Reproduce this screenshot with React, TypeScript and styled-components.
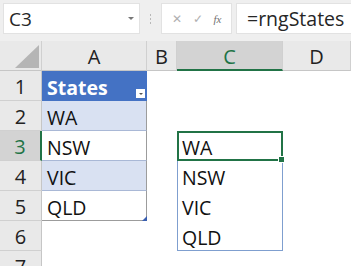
import React from "react";
import styled, { createGlobalStyle, css } from "styled-components";

const Global = createGlobalStyle`
  html, body { margin: 0; padding: 0; background: #ffffff; overflow: hidden; }
  body { font-family: "Open Sans", "Noto Sans", sans-serif; }
`;

const FONT = `"Open Sans", "Noto Sans", sans-serif`;
const GREEN = "#217346";

// 顶部编辑栏
const TopBar = styled.div`
  height: 41px;
  background: #efefef;
  display: flex;
  align-items: flex-start;
  padding: 3px 0 0 3px;
  box-sizing: border-box;
`;

const NameBox = styled.div`
  width: 137px;
  height: 31px;
  background: #fff;
  border: 1px solid #e2e2e2;
  box-sizing: border-box;
  display: flex;
  align-items: center;
  justify-content: space-between;
  padding: 0 5px 0 5px;
  font-family: ${FONT};
  font-size: 19px;
  color: #262626;
`;

const Caret = styled.span`
  width: 0;
  height: 0;
  border-left: 3px solid transparent;
  border-right: 3px solid transparent;
  border-top: 3px solid #777;
`;

const Dots = styled.div`
  width: 21px;
  height: 31px;
  display: flex;
  flex-direction: column;
  align-items: center;
  justify-content: center;
  gap: 2px;
  span {
    width: 1px;
    height: 2px;
    background: #b8b8b8;
  }
`;

const FuncBox = styled.div`
  width: 71px;
  height: 31px;
  background: #fff;
  border: 1px solid #e2e2e2;
  box-sizing: border-box;
  display: flex;
  align-items: center;
  justify-content: space-around;
  padding: 0 4px;
  color: #b0b0b0;
  font-family: ${FONT};
  font-size: 12px;
`;

const Fx = styled.span`
  font-family: "Liberation Serif", serif;
  font-style: italic;
  font-size: 11px;
  color: #707070;
`;

const Formula = styled.div`
  flex: 1;
  margin-left: 4px;
  height: 31px;
  background: #fff;
  border: 1px solid #e2e2e2;
  border-right: none;
  box-sizing: border-box;
  padding-left: 10px;
  display: flex;
  align-items: center;
  font-family: ${FONT};
  font-size: 19.5px;
  color: #262626;
`;

// 表格区域
const Sheet = styled.div`
  display: grid;
  grid-template-columns: 42px 105px 30px 106px 1fr;
  grid-template-rows: 30px repeat(7, 30px);
`;

const Corner = styled.div`
  background: #e9e9e9;
  border-right: 1px solid #d0d0d0;
  border-bottom: 1px solid #c6c6c6;
  box-sizing: border-box;
  position: relative;
  &::after {
    content: "";
    position: absolute;
    right: 2px;
    bottom: 2px;
    width: 0;
    height: 0;
    border-left: 24px solid transparent;
    border-bottom: 23px solid #b5b5b5;
  }
`;

const ColHead = styled.div<{ $active?: boolean }>`
  background: ${(p) => (p.$active ? "#d3d3d3" : "#e9e9e9")};
  color: ${(p) => (p.$active ? GREEN : "#222")};
  border-right: 1px solid #d0d0d0;
  border-bottom: ${(p) => (p.$active ? `2px solid ${GREEN}` : "1px solid #c6c6c6")};
  box-sizing: border-box;
  display: flex;
  align-items: center;
  justify-content: center;
  font-family: ${FONT};
  font-size: 20px;
  padding-top: 2px;
`;

const RowHead = styled.div<{ $active?: boolean }>`
  background: ${(p) => (p.$active ? "#d3d3d3" : "#e9e9e9")};
  color: ${(p) => (p.$active ? GREEN : "#222")};
  border-bottom: 1px solid #d0d0d0;
  border-right: ${(p) => (p.$active ? `2px solid ${GREEN}` : "1px solid #c6c6c6")};
  box-sizing: border-box;
  display: flex;
  align-items: center;
  justify-content: center;
  font-family: ${FONT};
  font-size: 20px;
  padding-top: 2px;
`;

type Tone = "head" | "band" | "plain";

const TableCell = styled.div<{ $tone: Tone; $last?: boolean }>`
  position: relative;
  box-sizing: border-box;
  display: flex;
  align-items: center;
  padding: 3px 0 0 5px;
  font-family: ${FONT};
  font-size: 19.5px;
  color: #111;
  border-right: 1px solid #9c9c9c;
  border-bottom: 1px solid ${(p) => (p.$last ? "#9c9c9c" : "#a9b8d6")};
  background: ${(p) =>
    p.$tone === "head" ? "#4472c4" : p.$tone === "band" ? "#d9e1f2" : "#ffffff"};
  ${(p) =>
    p.$tone === "head" &&
    css`
      color: #fff;
      font-weight: 700;
      border-right-color: #4472c4;
      border-bottom-color: #4472c4;
    `}
`;

const FilterBtn = styled.span`
  position: absolute;
  right: 1px;
  bottom: 2px;
  width: 9px;
  height: 9px;
  background: #fff;
  display: flex;
  align-items: center;
  justify-content: center;
  &::after {
    content: "";
    border-left: 2px solid transparent;
    border-right: 2px solid transparent;
    border-top: 2px solid #555;
  }
`;

const ResizeMark = styled.span`
  position: absolute;
  right: -1px;
  bottom: -1px;
  width: 0;
  height: 0;
  border-left: 5px solid transparent;
  border-bottom: 5px solid #3a5fb0;
`;

const Blank = styled.div``;

const SpillCell = styled.div<{ $selected?: boolean; $last?: boolean }>`
  position: relative;
  box-sizing: border-box;
  display: flex;
  align-items: center;
  padding: 3px 0 0 4px;
  font-family: ${FONT};
  font-size: 19.5px;
  color: #111;
  border-left: 1px solid #7f9fcf;
  border-right: 1px solid #7f9fcf;
  ${(p) => p.$last && css`border-bottom: 1px solid #7f9fcf;`}
  ${(p) =>
    p.$selected &&
    css`
      border: 2px solid ${GREEN};
      padding-left: 3px;
    `}
`;

const FillHandle = styled.span`
  position: absolute;
  right: -4px;
  bottom: -4px;
  width: 5px;
  height: 5px;
  background: ${GREEN};
  border: 1px solid #fff;
  z-index: 2;
`;

const states = ["WA", "NSW", "VIC", "QLD"];

const App: React.FC = () => {
  const rows = [1, 2, 3, 4, 5, 6, 7];
  return (
    <>
      <Global />
      <TopBar>
        <NameBox>
          <span>C3</span>
          <Caret />
        </NameBox>
        <Dots>
          <span />
          <span />
          <span />
        </Dots>
        <FuncBox>
          <span>✕</span>
          <span>✓</span>
          <Fx>fx</Fx>
        </FuncBox>
        <Formula>=rngStates</Formula>
      </TopBar>
      <Sheet>
        <Corner />
        <ColHead>A</ColHead>
        <ColHead>B</ColHead>
        <ColHead $active>C</ColHead>
        <ColHead>D</ColHead>
        {rows.map((r) => {
          const tableRow = r - 1;
          const spillIdx = r - 3;
          return (
            <React.Fragment key={r}>
              <RowHead $active={r === 3}>{r}</RowHead>
              {r === 1 ? (
                <TableCell $tone="head">
                  States
                  <FilterBtn />
                </TableCell>
              ) : r <= 5 ? (
                <TableCell $tone={tableRow % 2 === 1 ? "band" : "plain"} $last={r === 5}>
                  {states[tableRow - 1]}
                  {r === 5 && <ResizeMark />}
                </TableCell>
              ) : (
                <Blank />
              )}
              <Blank />
              {spillIdx >= 0 && spillIdx < 4 ? (
                <SpillCell $selected={spillIdx === 0} $last={spillIdx === 3}>
                  {states[spillIdx]}
                  {spillIdx === 0 && <FillHandle />}
                </SpillCell>
              ) : (
                <Blank />
              )}
              <Blank />
            </React.Fragment>
          );
        })}
      </Sheet>
    </>
  );
};

export default App;
